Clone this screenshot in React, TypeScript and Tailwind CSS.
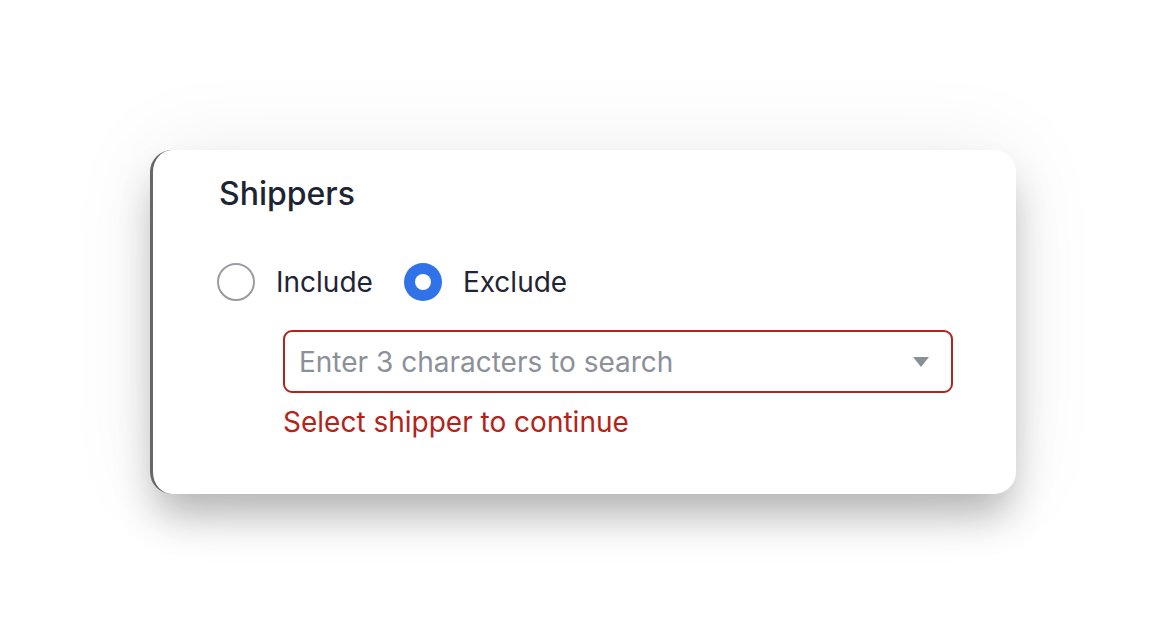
import { useState } from "react";

type Mode = "include" | "exclude";

function Radio({ checked, label, onSelect }: { checked: boolean; label: string; onSelect: () => void }) {
  return (
    <button type="button" onClick={onSelect} className="flex items-center gap-[21px]">
      {checked ? (
        <span className="w-[38px] h-[38px] rounded-full bg-[#3072e8] flex items-center justify-center">
          <span className="w-[16px] h-[16px] rounded-full bg-white" />
        </span>
      ) : (
        <span className="w-[38px] h-[38px] rounded-full border-2 border-[#9a9ca4] bg-white" />
      )}
      <span className="text-[28px] leading-[36px] text-[#1f2535]">{label}</span>
    </button>
  );
}

export default function App() {
  const [mode, setMode] = useState<Mode>("exclude");
  const [query, setQuery] = useState("");

  return (
    <div
      className="w-full h-[644px] bg-white flex items-center justify-center"
      style={{ fontFamily: "Inter, 'Noto Sans', sans-serif" }}
    >
      <div className="w-[866px] h-[344px] bg-white rounded-[22px] border-l-[3px] border-l-[#676767] shadow-[0_26px_40px_-6px_rgba(0,0,0,0.28),0_0_90px_rgba(0,0,0,0.07)] pl-[66px] pt-[24px] pr-[60px]">
        <h2 className="text-[32px] leading-[40px] font-medium text-[#1d2433]">Shippers</h2>

        <div className="mt-[49px] -ml-[2px] flex items-center gap-[31px]">
          <Radio checked={mode === "include"} label="Include" onSelect={() => setMode("include")} />
          <Radio checked={mode === "exclude"} label="Exclude" onSelect={() => setMode("exclude")} />
        </div>

        <div className="ml-[64px] mt-[29px] w-[670px]">
          <div className="h-[63px] border-2 border-[#b42318] rounded-[9px] flex items-center pl-[14px] pr-[22px]">
            <input
              value={query}
              onChange={(e) => setQuery(e.target.value)}
              placeholder="Enter 3 characters to search"
              className="flex-1 bg-transparent outline-none text-[28px] leading-[36px] text-[#1f2535] placeholder:text-[#8c9099]"
            />
            <svg width="16" height="10" viewBox="0 0 16 10" className="shrink-0">
              <path d="M0 0h16L8 10z" fill="#8b8f97" />
            </svg>
          </div>
          <p className="mt-[11px] text-[28px] leading-[36px] text-[#b42318]">Select shipper to continue</p>
        </div>
      </div>
    </div>
  );
}
